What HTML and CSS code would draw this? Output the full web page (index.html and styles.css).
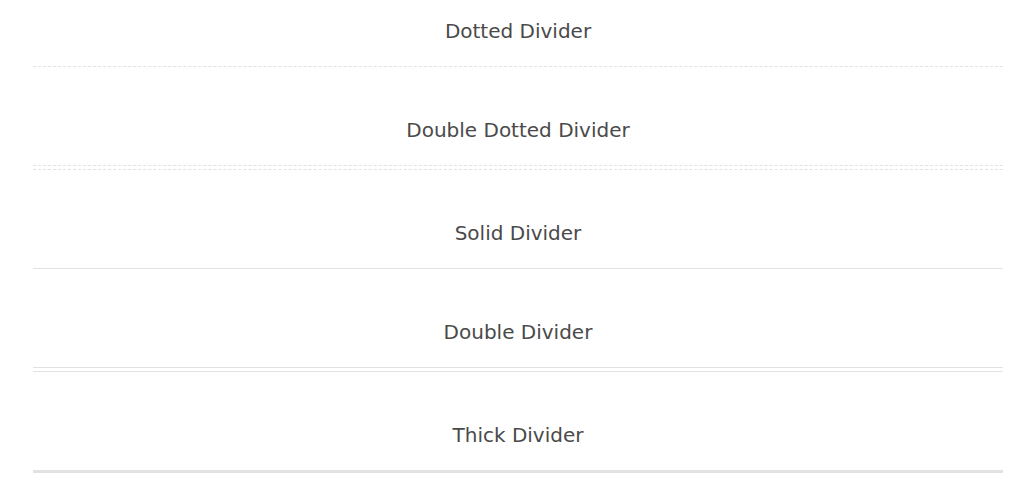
FILE: index.html
```html
<!DOCTYPE html>
<html lang="en">
<head>
<meta charset="utf-8">
<title>Dividers</title>
<link rel="stylesheet" href="styles.css">
</head>
<body>
<main class="page">
  <section class="item">
    <h2 class="label">Dotted Divider</h2>
    <div class="divider divider-dotted"></div>
  </section>
  <section class="item">
    <h2 class="label">Double Dotted Divider</h2>
    <div class="divider divider-double-dotted"></div>
  </section>
  <section class="item">
    <h2 class="label">Solid Divider</h2>
    <div class="divider divider-solid"></div>
  </section>
  <section class="item">
    <h2 class="label">Double Divider</h2>
    <div class="divider divider-double"></div>
  </section>
  <section class="item">
    <h2 class="label">Thick Divider</h2>
    <div class="divider divider-thick"></div>
  </section>
</main>
</body>
</html>
```

FILE: styles.css
```css
html, body {
  margin: 0;
  padding: 0;
  background: #ffffff;
}

.page {
  width: 970px;
  margin: 0 0 0 33px;
  padding-top: 19px;
  font-family: "DejaVu Sans", "Liberation Sans", sans-serif;
}

.item {
  display: flex;
  flex-direction: column;
}

.label {
  margin: 0 0 22px 0;
  font-size: 20px;
  font-weight: normal;
  line-height: 25px;
  text-align: center;
  color: #4a4a4a;
}

.divider {
  margin-bottom: 51px;
}

.item:last-child .divider {
  margin-bottom: 20px;
}

.divider-dotted {
  border-top: 1px dashed #e2e2e2;
}

.divider-double-dotted {
  height: 3px;
  border-top: 1px dashed #e2e2e2;
  border-bottom: 1px dashed #e2e2e2;
}

.divider-solid {
  border-top: 1px solid #e2e2e2;
}

.divider-double {
  height: 3px;
  border-top: 1px solid #e2e2e2;
  border-bottom: 1px solid #e2e2e2;
}

.divider-thick {
  border-top: 3px solid #e2e2e2;
}
```
